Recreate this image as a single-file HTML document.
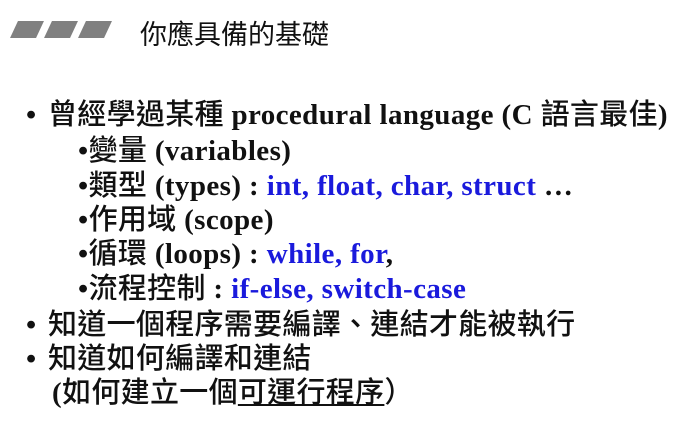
<html><head><style>
body{margin:0;width:692px;height:425px;background:#fff;position:relative;overflow:hidden;font-family:"Liberation Serif","Noto Sans CJK TC",serif;}
.t{position:absolute;left:140px;top:15px;font:27px "Noto Sans CJK TC",sans-serif;color:#111;line-height:36px;}
.p{position:absolute;width:26px;height:17px;background:#808080;transform:skewX(-25deg);top:21px;}
.l{position:absolute;font-weight:bold;font-size:29px;line-height:34px;white-space:nowrap;color:#111;letter-spacing:0.4px;}
.c{font-family:"Noto Sans CJK TC",sans-serif;font-weight:500;letter-spacing:0.3px;}
.b{color:#1a1adc;}
.d{display:inline-block;width:22px;}
</style></head><body>
<div class="p" style="left:14px"></div><div class="p" style="left:48px"></div><div class="p" style="left:82px"></div>
<div class="t">你應具備的基礎</div>
<div class="l" style="left:26px;top:95px"><span class="d">•</span><span class="c">曾經學過某種</span> procedural language (C <span class="c">語言最佳</span>)</div>
<div class="l" style="left:78px;top:131px">•<span class="c">變量</span> (variables)</div>
<div class="l" style="left:78px;top:166px">•<span class="c">類型</span> (types) : <span class="b">int, float, char, struct</span> …</div>
<div class="l" style="left:78px;top:200px">•<span class="c">作用域</span> (scope)</div>
<div class="l" style="left:78px;top:234px">•<span class="c">循環</span> (loops) : <span class="b">while, for</span>,</div>
<div class="l" style="left:78px;top:269px">•<span class="c">流程控制</span> : <span class="b">if-else, switch-case</span></div>
<div class="l" style="left:26px;top:305px"><span class="d">•</span><span class="c">知道一個程序需要編譯、連結才能被執行</span></div>
<div class="l" style="left:26px;top:339px"><span class="d">•</span><span class="c">知道如何編譯和連結</span></div>
<div class="l" style="left:52px;top:373px">(<span class="c">如何建立一個<u>可運行程序</u>）</span></div>
</body></html>
